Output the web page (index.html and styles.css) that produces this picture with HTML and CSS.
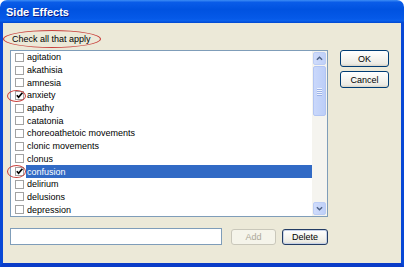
FILE: index.html
```html
<!DOCTYPE html>
<html>
<head>
<meta charset="utf-8">
<link rel="stylesheet" href="styles.css">
</head>
<body>
<div class="window">
  <div class="titlebar"><span class="title">Side Effects</span></div>
  <div class="frame">
    <div class="content">
      <div class="prompt">Check all that apply</div>
      <div class="listbox">
        <ul class="items">
          <li class="item"><span class="box"></span><span class="label">agitation</span></li>
          <li class="item"><span class="box"></span><span class="label">akathisia</span></li>
          <li class="item"><span class="box"></span><span class="label">amnesia</span></li>
          <li class="item"><span class="box"><svg class="tick" viewBox="0 0 9 9"><path d="M1.8 4.2 L3.6 6.2 L7.4 1.8"/></svg></span><span class="label">anxiety</span></li>
          <li class="item"><span class="box"></span><span class="label">apathy</span></li>
          <li class="item"><span class="box"></span><span class="label">catatonia</span></li>
          <li class="item"><span class="box"></span><span class="label">choreoathetoic movements</span></li>
          <li class="item"><span class="box"></span><span class="label">clonic movements</span></li>
          <li class="item"><span class="box"></span><span class="label">clonus</span></li>
          <li class="item selected"><span class="box"><svg class="tick" viewBox="0 0 9 9"><path d="M1.8 4.2 L3.6 6.2 L7.4 1.8"/></svg></span><span class="label">confusion</span></li>
          <li class="item"><span class="box"></span><span class="label">delirium</span></li>
          <li class="item"><span class="box"></span><span class="label">delusions</span></li>
          <li class="item"><span class="box"></span><span class="label">depression</span></li>
        </ul>
        <div class="scrollbar">
          <div class="sb-btn"><svg class="arrow" viewBox="0 0 8 5"><path d="M1 4 L4 1 L7 4"/></svg></div>
          <div class="sb-thumb"><span class="grip"></span><span class="grip"></span><span class="grip"></span><span class="grip"></span></div>
          <div class="sb-track"></div>
          <div class="sb-btn"><svg class="arrow" viewBox="0 0 8 5"><path d="M1 1 L4 4 L7 1"/></svg></div>
        </div>
      </div>
      <div class="actions">
        <button class="btn">OK</button>
        <button class="btn">Cancel</button>
      </div>
      <div class="entry-row">
        <input class="entry" type="text">
        <button class="btn btn-add" disabled>Add</button>
        <button class="btn btn-delete">Delete</button>
      </div>
    </div>
  </div>
  <div class="mark mark-prompt"></div>
  <div class="mark mark-anxiety"></div>
  <div class="mark mark-confusion"></div>
</div>
</body>
</html>
```

FILE: styles.css
```css
html, body {
  margin: 0;
  padding: 0;
  overflow: hidden;
  background: #ffffff;
}

.window {
  position: relative;
  width: 404px;
  height: 267px;
  display: flex;
  flex-direction: column;
  font-family: "Liberation Sans", Arial, sans-serif;
  font-size: 9px;
  color: #000;
}

.titlebar {
  height: 23px;
  flex: none;
  border-radius: 7px 7px 0 0;
  background: linear-gradient(to bottom, #3d8df5 0%, #0a5ce8 10%, #0052e0 40%, #0559e8 80%, #0a60ec 90%, #0047d0 100%);
  display: flex;
  align-items: center;
  padding-left: 6px;
  padding-top: 1px;
  box-sizing: border-box;
}

.title {
  color: #ffffff;
  font-weight: bold;
  font-size: 11px;
  text-shadow: 1px 1px 0 #0a1f8a;
}

.frame {
  flex: 1;
  background: #ece9d8;
  border-left: 3px solid #0848d6;
  border-right: 3px solid #0848d6;
  border-bottom: 4px solid #0a3cc8;
}

.content {
  display: grid;
  grid-template-columns: 318px 49px;
  column-gap: 12px;
  padding-left: 7px;
}

.prompt {
  grid-column: 1;
  grid-row: 1;
  padding-top: 10px;
  padding-left: 2px;
  line-height: 12px;
  height: 12px;
  margin-bottom: 5px;
}

.listbox {
  grid-column: 1;
  grid-row: 2;
  height: 167px;
  box-sizing: border-box;
  border: 1px solid #7f9db9;
  background: #ffffff;
  display: flex;
}

.items {
  list-style: none;
  margin: 0;
  padding: 0;
  flex: 1;
  overflow: hidden;
}

.item {
  height: 12.7px;
  display: flex;
  align-items: center;
  padding-left: 4px;
}

.box {
  width: 9px;
  height: 9px;
  box-sizing: border-box;
  border: 1px solid #a2a2a2;
  background: #ffffff;
  flex: none;
  margin-right: 2px;
  position: relative;
}

.tick {
  position: absolute;
  left: -1px;
  top: -1px;
  width: 9px;
  height: 9px;
}

.tick path {
  fill: none;
  stroke: #000000;
  stroke-width: 1.7;
}

.label {
  flex: 1;
  height: 100%;
  display: flex;
  align-items: center;
  padding-left: 1px;
  white-space: nowrap;
}

.selected .label {
  background: #316ac5;
  color: #ffffff;
}

.scrollbar {
  width: 15px;
  flex: none;
  box-sizing: border-box;
  padding: 1px 1px 1px 1px;
  background: #f5f4ef;
  display: flex;
  flex-direction: column;
}

.sb-btn {
  height: 13px;
  flex: none;
  box-sizing: border-box;
  border: 1px solid #bccdf5;
  border-radius: 2px;
  background: linear-gradient(to right, #d0dcfb, #bfd0f8);
  display: flex;
  align-items: center;
  justify-content: center;
}

.arrow {
  width: 7px;
  height: 5px;
}

.arrow path {
  fill: none;
  stroke: #4d6185;
  stroke-width: 1.6;
}

.sb-thumb {
  height: 50px;
  flex: none;
  box-sizing: border-box;
  border: 1px solid #b2c5f3;
  border-radius: 2px;
  background: linear-gradient(to right, #cad8fb, #bccef8);
  display: flex;
  flex-direction: column;
  align-items: center;
  justify-content: center;
  gap: 1px;
  margin-top: 1px;
}

.grip {
  width: 5px;
  height: 1px;
  background: #eef3fe;
  box-shadow: 0 1px 0 #9cb2e6;
}

.sb-track {
  flex: 1;
}

.actions {
  grid-column: 2;
  grid-row: 2;
  display: flex;
  flex-direction: column;
  gap: 4px;
  align-self: start;
}

.btn {
  font-family: "Liberation Sans", Arial, sans-serif;
  font-size: 9px;
  color: #000000;
  height: 17px;
  padding: 0;
  box-sizing: border-box;
  border: 1px solid #003c74;
  border-radius: 3px;
  background: linear-gradient(to bottom, #ffffff 0%, #f5f4ef 50%, #ecebe4 85%, #d8d3c6 100%);
}

.actions .btn {
  width: 49px;
}

.entry-row {
  grid-column: 1;
  grid-row: 3;
  display: flex;
  align-items: center;
  margin-top: 11px;
}

.entry {
  width: 212px;
  height: 17px;
  box-sizing: border-box;
  border: 1px solid #7f9db9;
  background: #ffffff;
  margin: 0 9px 0 0;
  padding: 0;
}

.btn-add {
  width: 45px;
  height: 16px;
  margin-right: 6px;
  color: #aca899;
  border-color: #c9c7ba;
  background: #f5f4ea;
}

.btn-delete {
  width: 46px;
  height: 16px;
  border-color: #233c64;
  box-shadow: inset 0 0 0 1px #c7d2e8;
}

.mark {
  position: absolute;
  box-sizing: border-box;
  border: 1px solid #c8403c;
  border-radius: 50%;
}

.mark-prompt {
  left: 3px;
  top: 30px;
  width: 98px;
  height: 18px;
}

.mark-anxiety {
  left: 7px;
  top: 90px;
  width: 19px;
  height: 12px;
}

.mark-confusion {
  left: 7px;
  top: 165px;
  width: 19px;
  height: 13px;
}
```
